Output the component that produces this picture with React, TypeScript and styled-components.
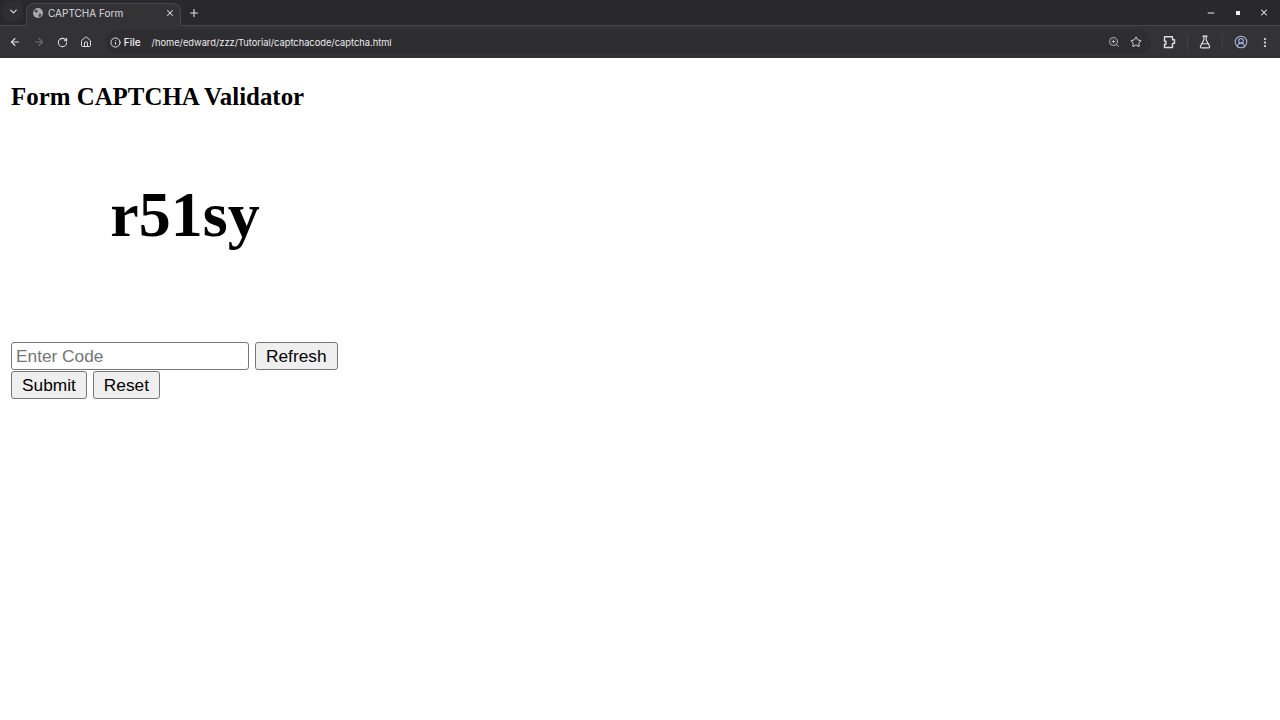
import styled, { createGlobalStyle } from "styled-components";
import {
  ArrowLeft,
  ArrowRight,
  ChevronDown,
  EllipsisVertical,
  House,
  Info,
  Minus,
  Plus,
  RotateCw,
  Star,
  X,
  ZoomIn,
  FlaskConical,
  CircleUserRound,
} from "lucide-react";

const GlobalStyle = createGlobalStyle`
  html, body {
    margin: 0;
    padding: 0;
    height: 100%;
    background: #fff;
    overflow: hidden;
  }
`;

const Window = styled.div`
  width: 1280px;
  height: 720px;
  display: flex;
  flex-direction: column;
`;

const TabStrip = styled.div`
  height: 26px;
  flex: none;
  box-sizing: border-box;
  display: flex;
  align-items: flex-end;
  background: #29282b;
  border-bottom: 1px solid #47464a;
  color: #dedde0;
  font-family: "Inter", "Liberation Sans", sans-serif;
`;

const TabSearch = styled.div`
  width: 20px;
  height: 20px;
  margin: 0 0 4px 3px;
  border-radius: 6px;
  background: #2f2e31;
  display: flex;
  align-items: center;
  justify-content: center;
`;

const Tab = styled.div`
  width: 155px;
  height: 23px;
  margin: 0 0 -1px 3px;
  padding: 0 5px 4px 5px;
  box-sizing: border-box;
  display: flex;
  align-items: center;
  gap: 4px;
  background: #333235;
  border: 1px solid #47464a;
  border-bottom: none;
  border-radius: 8px 8px 0 0;
  font-size: 10px;
`;

const TabTitle = styled.span`
  flex: 1;
  white-space: nowrap;
`;

const NewTab = styled.div`
  width: 26px;
  height: 25px;
  padding-top: 1px;
  box-sizing: border-box;
  display: flex;
  align-items: center;
  justify-content: center;
`;

const WindowControls = styled.div`
  margin-left: auto;
  height: 25px;
  display: flex;
  align-items: center;
  gap: 16.5px;
  padding-right: 11px;
`;

const WindowButton = styled.span`
  width: 10px;
  height: 10px;
  display: flex;
  align-items: center;
  justify-content: center;
  color: #eeeeee;
`;

const MaximizeBox = styled.div`
  width: 4px;
  height: 4px;
  background: #eeeeee;
`;

const Toolbar = styled.div`
  height: 32px;
  flex: none;
  display: flex;
  align-items: center;
  background: #333235;
  color: #dedde0;
  font-family: "Inter", "Liberation Sans", sans-serif;
  font-size: 9.3px;
`;

const NavGroup = styled.div`
  display: flex;
  align-items: center;
  gap: 9.6px;
  padding-left: 8px;
`;

const NavIcon = styled.span<{ $dim?: boolean }>`
  width: 14px;
  height: 14px;
  display: flex;
  align-items: center;
  justify-content: center;
  color: ${(p) => (p.$dim ? "#6f6e72" : "#dedde0")};
`;

const AddressBar = styled.div`
  width: 1047px;
  height: 24px;
  margin-left: 13px;
  padding: 0 9px 0 4px;
  box-sizing: border-box;
  display: flex;
  align-items: center;
  border-radius: 12px;
  background: #2e2d30;
`;

const SiteInfo = styled.div`
  display: flex;
  align-items: center;
  gap: 3px;
  font-size: 10px;
  font-weight: 500;
  color: #f0eff2;
`;

const Url = styled.span`
  margin-left: 11px;
  flex: 1;
  color: #ececee;
`;

const AddressActions = styled.div`
  display: flex;
  align-items: center;
  gap: 10px;
`;

const ToolbarActions = styled.div`
  flex: 1;
  display: flex;
  align-items: center;
  justify-content: flex-end;
  padding-right: 9px;
`;

const ActionSlot = styled.span<{ $width: number }>`
  width: ${(p) => p.$width}px;
  display: flex;
  align-items: center;
  justify-content: center;
`;

const Separator = styled.span`
  width: 1px;
  height: 14px;
  flex: none;
  background: #414043;
`;

const Page = styled.main`
  flex: 1;
  background: #fff;
  padding: 10px 11px;
  font-family: "Liberation Serif", serif;
  color: #000;
`;

const Heading = styled.h2`
  margin: 14px 0 0;
  font-size: 24.9px;
  line-height: 30px;
  font-weight: 700;
`;

const Captcha = styled.div`
  width: 350px;
  height: 200px;
  margin-top: 3px;
  margin-bottom: 27px;
  display: flex;
  align-items: center;
  justify-content: center;
  box-sizing: border-box;
  padding-right: 2px;
  font-size: 64px;
  font-weight: 700;
`;

const Row = styled.div`
  display: flex;
  gap: 6px;
  height: 29px;
`;

const CodeInput = styled.input`
  width: 238px;
  height: 28px;
  box-sizing: border-box;
  padding: 0 4px;
  border: 1px solid #767676;
  border-radius: 3px;
  font-family: "Liberation Sans", sans-serif;
  font-size: 17.3px;
  color: #000;

  &::placeholder {
    color: #757575;
  }
`;

const Button = styled.button`
  height: 28px;
  box-sizing: border-box;
  padding: 0 10px;
  border: 1px solid #767676;
  border-radius: 3px;
  background: #efefef;
  font-family: "Liberation Sans", sans-serif;
  font-size: 17.3px;
  color: #000;
`;

function TabGlobe() {
  return (
    <svg width="12" height="12" viewBox="0 0 12 12">
      <circle cx="6" cy="6" r="5" fill="#a9a8ac" />
      <path
        d="M3 2.5 6 3.5 5.5 5.5 3.5 5.5 2 4ZM7 6.5 9.8 7 8 10 6.5 9.5Z"
        fill="#4c4b4f"
      />
    </svg>
  );
}

function ExtensionIcon() {
  return (
    <svg
      width="14"
      height="14"
      viewBox="0 0 14 14"
      fill="none"
      stroke="#dedde0"
      strokeWidth="1.4"
      strokeLinejoin="round"
    >
      <path d="M2.5 1.8h8v3h2v3.6h-2v4.1h-8V9.2h1.4V6.2H2.5Z" />
    </svg>
  );
}

export default function App() {
  return (
    <Window>
      <GlobalStyle />
      <TabStrip>
        <TabSearch>
          <ChevronDown size={11} strokeWidth={2.5} />
        </TabSearch>
        <Tab>
          <TabGlobe />
          <TabTitle>CAPTCHA Form</TabTitle>
          <X size={10} strokeWidth={2.5} />
        </Tab>
        <NewTab>
          <Plus size={12} strokeWidth={2.25} />
        </NewTab>
        <WindowControls>
          <WindowButton>
            <Minus size={10} strokeWidth={2.5} />
          </WindowButton>
          <WindowButton>
            <MaximizeBox />
          </WindowButton>
          <WindowButton>
            <X size={11} strokeWidth={2.5} />
          </WindowButton>
        </WindowControls>
      </TabStrip>
      <Toolbar>
        <NavGroup>
          <NavIcon>
            <ArrowLeft size={12} strokeWidth={2.25} />
          </NavIcon>
          <NavIcon $dim>
            <ArrowRight size={12} strokeWidth={2.25} />
          </NavIcon>
          <NavIcon>
            <RotateCw size={11} strokeWidth={2.25} />
          </NavIcon>
          <NavIcon>
            <House size={12} strokeWidth={2} />
          </NavIcon>
        </NavGroup>
        <AddressBar>
          <SiteInfo>
            <Info size={11} strokeWidth={2} />
            File
          </SiteInfo>
          <Url>/home/edward/zzz/Tutorial/captchacode/captcha.html</Url>
          <AddressActions>
            <ZoomIn size={12} color="#b5b4b8" strokeWidth={2} />
            <Star size={12} strokeWidth={2} />
          </AddressActions>
        </AddressBar>
        <ToolbarActions>
          <ActionSlot $width={36}>
            <ExtensionIcon />
          </ActionSlot>
          <Separator />
          <ActionSlot $width={34}>
            <FlaskConical size={14} strokeWidth={2} />
          </ActionSlot>
          <Separator />
          <ActionSlot $width={36}>
            <CircleUserRound size={14} color="#a9bde6" strokeWidth={1.75} />
          </ActionSlot>
          <ActionSlot $width={12}>
            <EllipsisVertical size={13} strokeWidth={2.5} />
          </ActionSlot>
        </ToolbarActions>
      </Toolbar>
      <Page>
        <Heading>Form CAPTCHA Validator</Heading>
        <Captcha>r51sy</Captcha>
        <Row>
          <CodeInput placeholder="Enter Code" />
          <Button>Refresh</Button>
        </Row>
        <Row>
          <Button>Submit</Button>
          <Button>Reset</Button>
        </Row>
      </Page>
    </Window>
  );
}
